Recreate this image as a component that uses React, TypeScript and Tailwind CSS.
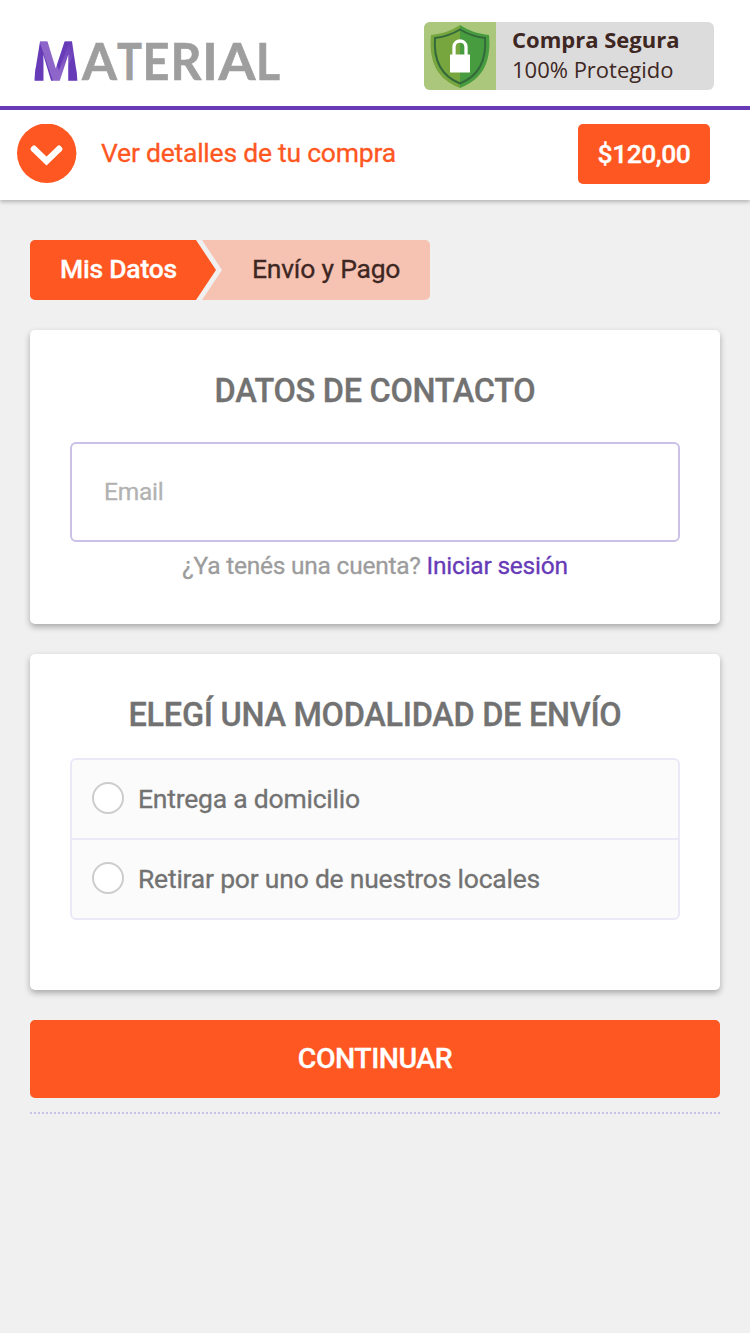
import React, { useState } from "react";

interface ShippingOption {
  id: string;
  label: string;
}

const shippingOptions: ShippingOption[] = [
  { id: "home", label: "Entrega a domicilio" },
  { id: "store", label: "Retirar por uno de nuestros locales" },
];

const Logo: React.FC = () => (
  <svg width="262" height="68" viewBox="-6 -8 262 68" role="img" aria-label="Material">
    <defs>
      <linearGradient id="fold" x1="0" y1="1" x2="0.6" y2="0">
        <stop offset="0.2" stopColor="#9068cb" />
        <stop offset="1" stopColor="#673ab7" />
      </linearGradient>
      <pattern id="m-fill" x="-6" y="-8" width="262" height="68" patternUnits="userSpaceOnUse">
        <rect width="262" height="68" fill="#673ab7" />
        <path d="M28 53 L44 10 L49 22 L33 53 Z" fill="url(#fold)" />
        <path d="M12 12 H19.500 L33 45 L31 53 H26 Z" fill="#8e66c9" />
      </pattern>
      <clipPath id="m-taper">
        <path d="M0.500 46 L7 5.500 H39 L45 46 Z" />
      </clipPath>
    </defs>
    <g clipPath="url(#m-taper)">
      <text
        x="-2.5"
        y="44"
        textLength="51"
        lengthAdjust="spacingAndGlyphs"
        fill="url(#m-fill)"
        stroke="url(#m-fill)"
        strokeWidth="1.500"
        className="font-['Open_Sans'] text-[53px] font-bold"
      >
        M
      </text>
    </g>
    <g
      fill="#9e9e9e"
      stroke="#9e9e9e"
      strokeWidth="0.600"
      className="font-['Lato'] text-[52px] font-bold"
    >
      <text x="49" y="44" textLength="35" lengthAdjust="spacingAndGlyphs">A</text>
      <text x="84" y="44" textLength="25" lengthAdjust="spacingAndGlyphs">T</text>
      <text x="109.5" y="44" textLength="27" lengthAdjust="spacingAndGlyphs">E</text>
      <text x="137.5" y="44" textLength="31" lengthAdjust="spacingAndGlyphs">R</text>
      <text x="169" y="44" textLength="16" lengthAdjust="spacingAndGlyphs">I</text>
      <text x="185.5" y="44" textLength="37" lengthAdjust="spacingAndGlyphs">A</text>
      <text x="223" y="44" textLength="24" lengthAdjust="spacingAndGlyphs">L</text>
    </g>
  </svg>
);

const ShieldIcon: React.FC = () => (
  <svg width="60" height="64" viewBox="0 0 60 64">
    <path d="M30 1 C21 7 11 10 1 11 C-1 34 4 54 30 64 Z" fill="#76a63d" />
    <path d="M30 1 C39 7 49 10 59 11 C61 34 56 54 30 64 Z" fill="#489c40" />
    <path
      d="M30 5.5 C22 10.5 13 13 5 14 C3.500 34 9 51 30 59.500 C51 51 56.500 34 55 14 C47 13 38 10.500 30 5.500 Z"
      fill="none"
      stroke="#33693b"
      strokeWidth="2"
    />
    <path d="M24 31 V23 C24 15 36 15 36 23 V31" fill="none" stroke="#fff" strokeWidth="3.300" />
    <rect x="20" y="30.500" width="20" height="18" rx="0.500" fill="#fff" />
  </svg>
);

const SecureBadge: React.FC = () => (
  <div className="flex h-[68px] w-[290px] overflow-hidden rounded-[6px] bg-[#dcdcdc] font-['Open_Sans',sans-serif] text-[#3e2723]">
    <div className="flex w-[72px] items-center justify-center bg-[#aac77b]">
      <ShieldIcon />
    </div>
    <div className="pl-4 pt-[2px] text-[22px] leading-[30px]">
      <div className="font-bold">Compra Segura</div>
      <div>100% Protegido</div>
    </div>
  </div>
);

const Steps: React.FC = () => (
  <div className="flex h-[60px] w-[400px] text-[26.5px] leading-[58px] tracking-[-0.22px]">
    <div className="w-[186px] rounded-l-[5px] bg-[#ff5722] pl-[30px] font-medium text-white [clip-path:polygon(0_0,166px_0,186px_50%,166px_100%,0_100%)]">
      Mis Datos
    </div>
    <div className="-ml-[14px] w-[228px] rounded-r-[5px] bg-[#f6c2b2] pl-[50px] text-[#3e2723] [clip-path:polygon(0_0,100%_0,100%_100%,0_100%,20px_50%)]">
      Envío y Pago
    </div>
  </div>
);

const Card: React.FC<{ title: string; className: string; children: React.ReactNode }> = ({
  title,
  className,
  children,
}) => (
  <section
    className={`rounded-[5px] bg-white px-10 shadow-[0_3px_6px_rgba(0,0,0,0.3)] ${className}`}
  >
    <h2 className="pt-10 text-center text-[32.5px] font-medium leading-[42px] tracking-[-0.3px] text-[#727272]">
      {title}
    </h2>
    {children}
  </section>
);

const App: React.FC = () => {
  const [email, setEmail] = useState("");
  const [shipping, setShipping] = useState("");

  return (
    <div className="min-h-screen bg-[#f0f0f0] font-['Roboto',sans-serif] [-webkit-text-stroke:0.3px]">
      <header className="bg-white shadow-[0_2px_4px_rgba(0,0,0,0.25)]">
        <div className="flex h-[110px] items-start justify-between border-b-4 border-[#673ab7] pl-[27px] pr-9">
          <div className="pt-7">
            <Logo />
          </div>
          <div className="pt-[22px] [-webkit-text-stroke:0]">
            <SecureBadge />
          </div>
        </div>

        <div className="flex h-[90px] items-start justify-between pl-[17px] pr-10 pt-[14px]">
          <button
            type="button"
            className="flex items-start text-[26.5px] tracking-[-0.23px] text-[#ff5722]"
          >
            <svg width="60" height="60" viewBox="0 0 60 60">
              <circle cx="29.700" cy="29.200" r="29.700" fill="#ff5722" />
              <path
                d="M16.500 24.500 L29.500 37 L42.500 24.500"
                fill="none"
                stroke="#fff"
                strokeWidth="6.500"
              />
              <path d="M16 25 L17 24 M42 24 L43 25" stroke="#fff" strokeWidth="5" strokeLinecap="round" />
            </svg>
            <span className="pl-6 leading-[58px]">Ver detalles de tu compra</span>
          </button>
          <div className="h-[60px] w-[132px] rounded-[5px] bg-[#ff5722] text-center text-[26.5px] font-medium leading-[60px] tracking-[-0.5px] text-white">
            $120,00
          </div>
        </div>
      </header>

      <main className="px-[30px] pt-10">
        <Steps />

        <Card title="DATOS DE CONTACTO" className="mt-[30px] h-[294px]">
          <input
            type="email"
            name="email"
            value={email}
            onChange={(e) => setEmail(e.target.value)}
            placeholder="Email"
            className="mt-[30px] block h-[100px] w-full rounded-[6px] border-2 border-[#cbc1e6] px-8 pb-[2px] text-[24.5px] tracking-[-0.25px] outline-none placeholder:text-[#b2b2b2]"
          />
          <p className="pt-[6px] text-center text-[24.5px] leading-9 tracking-[-0.23px] text-[#9c9c9c]">
            ¿Ya tenés una cuenta?{" "}
            <a href="#login" className="text-[#673ab7]">
              Iniciar sesión
            </a>
          </p>
        </Card>

        <Card title="ELEGÍ UNA MODALIDAD DE ENVÍO" className="mt-[30px] h-[336px]">
          <div className="mt-[22px] h-[162px] divide-y-2 divide-[#ebe8f8] rounded-[6px] border-2 border-[#ebe8f8] bg-[#fbfbfb]">
            {shippingOptions.map((option) => (
              <label
                key={option.id}
                className="flex h-20 items-center pl-5 text-[26.5px] tracking-[-0.22px] text-[#727272] last:h-[78px]"
              >
                <input
                  type="radio"
                  name="shipping"
                  checked={shipping === option.id}
                  onChange={() => setShipping(option.id)}
                  className="mb-[2px] size-8 appearance-none rounded-full border-2 border-[#cccccc] bg-white checked:border-[10px] checked:border-[#ff5722]"
                />
                <span className="pl-[14px]">{option.label}</span>
              </label>
            ))}
          </div>
        </Card>

        <button
          type="button"
          className="mt-[30px] block h-[78px] w-full rounded-[5px] bg-[#ff5722] text-[28.5px] font-medium tracking-[-0.5px] text-white"
        >
          CONTINUAR
        </button>
        <div className="mt-[14px] border-b-2 border-dotted border-[#cbc1e6]" />
      </main>
    </div>
  );
};

export default App;
